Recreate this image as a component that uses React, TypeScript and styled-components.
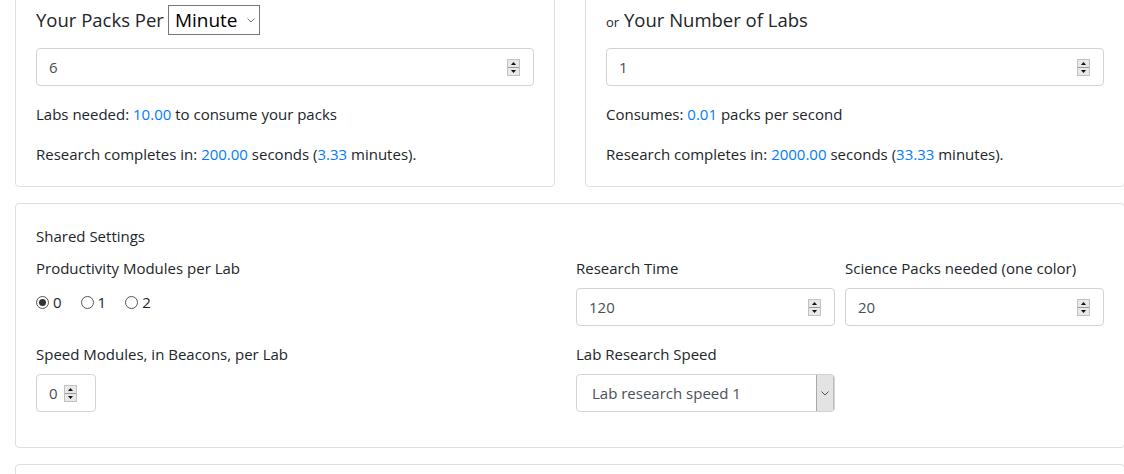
import React from 'react';
import styled, { createGlobalStyle } from 'styled-components';

const GlobalStyle = createGlobalStyle`
  html, body {
    margin: 0;
    background: #fff;
    overflow: hidden;
  }
  body {
    font-family: 'Open Sans', 'Noto Sans', sans-serif;
    font-size: 15px;
    line-height: 24px;
    color: #212529;
  }
`;

const Page = styled.div`
  width: 1110px;
  padding: 0 15px;
  margin-top: -16px;
  display: flex;
  flex-direction: column;
  gap: 16px;
`;

const TopRow = styled.div`
  display: grid;
  grid-template-columns: 1fr 1fr;
  column-gap: 30px;
`;

const Card = styled.section<{ $tall?: boolean; $spaced?: boolean }>`
  border: 1px solid #dfdfdf;
  border-radius: 4px;
  padding: 20px 20px ${(p) => (p.$spaced ? '35px' : '20px')};
  min-height: ${(p) => (p.$tall ? '120px' : 'auto')};
`;

const Heading = styled.h5`
  margin: 0 0 13px;
  font-size: 18.5px;
  font-weight: 500;
  line-height: 30px;
  height: 30px;
  white-space: nowrap;
`;

const Or = styled.small`
  font-size: 13px;
  font-weight: 400;
`;

const UnitSelect = styled.span`
  display: inline-flex;
  align-items: center;
  justify-content: space-between;
  vertical-align: top;
  box-sizing: border-box;
  height: 30px;
  width: 92px;
  margin-left: 4px;
  padding: 0 4px 0 6px;
  border: 1px solid #767676;
  color: #000;
  font-size: 19px;
  font-weight: 400;
`;

const Field = styled.div<{ $width?: number; $compact?: boolean }>`
  display: flex;
  align-items: center;
  box-sizing: border-box;
  height: 38px;
  width: ${(p) => (p.$width ? `${p.$width}px` : '100%')};
  padding: 0 ${(p) => (p.$compact ? '18px' : '13px')} 0 12px;
  border: 1px solid #ced4da;
  border-radius: 4px;
  background: #fff;
`;

const FieldInput = styled.input`
  flex: 1;
  min-width: 0;
  border: 0;
  outline: 0;
  padding: 0;
  font: inherit;
  color: #495057;
  background: transparent;
`;

const Text = styled.p`
  margin: 16px 0 0;
`;

const Value = styled.span`
  color: #007bff;
`;

const Label = styled.div`
  margin-bottom: 8px;
`;

const SettingsGrid = styled.div`
  display: grid;
  grid-template-columns: 530px 1fr 1fr;
  column-gap: 10px;
  row-gap: 16px;
`;

const Group = styled.div``;

const Radios = styled.div`
  display: flex;
  align-items: center;
  height: 24px;
  padding-top: 2px;
`;

const RadioItem = styled.label`
  display: inline-flex;
  align-items: center;
  gap: 4px;
  margin-right: 19px;
  color: #212529;
`;

const RadioCircle = styled.span<{ $checked?: boolean }>`
  box-sizing: border-box;
  width: 13px;
  height: 13px;
  border-radius: 50%;
  border: 1px solid #555;
  background: #fff;
  display: inline-flex;
  align-items: center;
  justify-content: center;
  &::after {
    content: '';
    width: 7px;
    height: 7px;
    border-radius: 50%;
    background: ${(p) => (p.$checked ? '#333' : 'transparent')};
  }
`;

const SelectBox = styled.div`
  display: flex;
  align-items: stretch;
  box-sizing: border-box;
  height: 38px;
  border: 1px solid #ced4da;
  border-radius: 4px;
  color: #495057;
  overflow: hidden;
`;

const SelectText = styled.span`
  flex: 1;
  padding-left: 15px;
  display: flex;
  align-items: center;
`;

const SelectButton = styled.span`
  width: 16px;
  display: flex;
  align-items: center;
  justify-content: center;
  background: #e3e3e3;
  border-left: 1px solid #a9a9a9;
  border-right: 1px solid #bdbdbd;
`;

const Spinner = () => (
  <svg width="13" height="17" viewBox="0 0 13 17">
    <rect x="0.5" y="0.5" width="12" height="16" fill="#e8e8e8" stroke="#c2c2c2" />
    <line x1="1" y1="8.5" x2="12" y2="8.5" stroke="#9a9a9a" />
    <path d="M4 6 L6.5 3 L9 6 Z" fill="#111" />
    <path d="M4 11 L9 11 L6.5 14 Z" fill="#111" />
  </svg>
);

const Chevron = ({ color = '#555' }: { color?: string }) => (
  <svg width="8" height="5" viewBox="0 0 8 5">
    <path d="M0.5 0.5 L4 4 L7.5 0.5" fill="none" stroke={color} strokeWidth="1" />
  </svg>
);

const NumberField = ({ value, width, compact }: { value: string; width?: number; compact?: boolean }) => (
  <Field $width={width} $compact={compact}>
    <FieldInput type="text" defaultValue={value} />
    <Spinner />
  </Field>
);

const Radio = ({ label, checked }: { label: string; checked?: boolean }) => (
  <RadioItem>
    <RadioCircle $checked={checked} />
    {label}
  </RadioItem>
);

export default function App() {
  return (
    <>
      <GlobalStyle />
      <Page>
        <TopRow>
          <Card>
            <Heading>
              Your Packs Per
              <UnitSelect>
                Minute
                <Chevron color="#777" />
              </UnitSelect>
            </Heading>
            <NumberField value="6" />
            <Text>
              Labs needed: <Value>10.00</Value> to consume your packs
            </Text>
            <Text>
              Research completes in: <Value>200.00</Value> seconds (<Value>3.33</Value> minutes).
            </Text>
          </Card>
          <Card>
            <Heading>
              <Or>or</Or> Your Number of Labs
            </Heading>
            <NumberField value="1" />
            <Text>
              Consumes: <Value>0.01</Value> packs per second
            </Text>
            <Text>
              Research completes in: <Value>2000.00</Value> seconds (<Value>33.33</Value> minutes).
            </Text>
          </Card>
        </TopRow>

        <Card $spaced>
          <Label>Shared Settings</Label>
          <SettingsGrid>
            <Group>
              <Label>Productivity Modules per Lab</Label>
              <Radios>
                <Radio label="0" checked />
                <Radio label="1" />
                <Radio label="2" />
              </Radios>
            </Group>
            <Group>
              <Label>Research Time</Label>
              <NumberField value="120" />
            </Group>
            <Group>
              <Label>Science Packs needed (one color)</Label>
              <NumberField value="20" />
            </Group>
            <Group>
              <Label>Speed Modules, in Beacons, per Lab</Label>
              <NumberField value="0" width={60} compact />
            </Group>
            <Group>
              <Label>Lab Research Speed</Label>
              <SelectBox>
                <SelectText>Lab research speed 1</SelectText>
                <SelectButton>
                  <Chevron />
                </SelectButton>
              </SelectBox>
            </Group>
          </SettingsGrid>
        </Card>

        <Card $tall />
      </Page>
    </>
  );
}
